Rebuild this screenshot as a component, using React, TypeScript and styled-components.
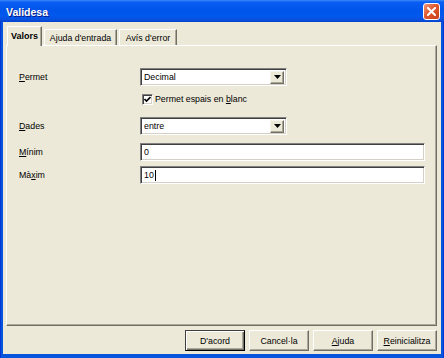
import styled, { createGlobalStyle } from 'styled-components';

const Global = createGlobalStyle`
  html, body { margin: 0; padding: 0; }
  body {
    width: 444px;
    height: 358px;
    overflow: hidden;
    background: #ece9d8;
    font-family: "Liberation Sans", Arial, sans-serif;
    font-size: 8.8px;
    color: #000;
  }
`;

const Window = styled.div`
  width: 444px;
  height: 358px;
  box-sizing: border-box;
  display: flex;
  flex-direction: column;
  background: linear-gradient(to right, #0019cf 0, #0855dd 1px, #0855dd calc(100% - 1px), #0019cf 100%);
  padding: 0 3px 4px;
`;

const TitleBar = styled.div`
  height: 22px;
  margin: 0 -3px;
  display: flex;
  align-items: center;
  justify-content: space-between;
  padding: 0 4px 0 6px;
  background: linear-gradient(to bottom, #3d8cf5 0, #0a5ef3 2px, #0055ea 9px, #0058ee 16px, #0a4fdc 20px, #0042cc 22px);
`;

const Title = styled.span`
  color: #fff;
  font-weight: bold;
  font-size: 10.5px;
  text-shadow: 1px 1px #0a1883;
  margin-top: 1px;
`;

const CloseButton = styled.div`
  width: 17px;
  height: 17px;
  box-sizing: border-box;
  border: 1px solid #fff;
  border-radius: 3px;
  background: linear-gradient(135deg, #ec9877 0%, #e0592f 45%, #c7401a 100%);
  display: flex;
  align-items: center;
  justify-content: center;
`;

const Body = styled.div`
  flex: 1;
  display: flex;
  flex-direction: column;
  background: #ece9d8;
  padding: 4px 4px 3px 3px;
`;

const TabRow = styled.div`
  display: flex;
  align-items: flex-end;
  gap: 2px;
  height: 19px;
  padding-left: 1px;
  position: relative;
  z-index: 1;
`;

const Tab = styled.div<{ $active?: boolean; $w: number }>`
  width: ${p => p.$w}px;
  height: ${p => (p.$active ? 20 : 16)}px;
  box-sizing: border-box;
  margin-bottom: ${p => (p.$active ? -1 : 0)}px;
  padding-bottom: ${p => (p.$active ? 1 : 0)}px;
  background: #ece9d8;
  border-top: 1px solid #fff;
  border-left: 1px solid #fff;
  border-right: 1px solid #716f64;
  box-shadow: inset -1px 0 #aca899;
  display: flex;
  align-items: center;
  justify-content: center;
  font-weight: ${p => (p.$active ? 'bold' : 'normal')};
  font-size: ${p => (p.$active ? 9 : 8.8)}px;
`;

const Panel = styled.div`
  flex: 1;
  box-sizing: border-box;
  border-top: 1px solid #fff;
  border-left: 1px solid #fff;
  border-right: 1px solid #716f64;
  border-bottom: 1px solid #716f64;
  box-shadow: inset -1px -1px #aca899;
  padding: 22px 11px 0 11px;
  display: flex;
  flex-direction: column;
`;

const Row = styled.div<{ $gap: number; $h: number }>`
  display: grid;
  grid-template-columns: 122px 1fr;
  align-items: center;
  margin-top: ${p => p.$gap}px;
  height: ${p => p.$h}px;
`;

const Label = styled.span`
  padding-left: 1px;
`;

const U = styled.span`
  text-decoration: underline;
`;

const Select = styled.div`
  width: 147px;
  height: 18px;
  box-sizing: border-box;
  background: #fff;
  border-top: 1px solid #808080;
  border-left: 1px solid #808080;
  border-right: 1px solid #fff;
  border-bottom: 1px solid #fff;
  box-shadow: inset 1px 1px #404040, inset -1px -1px #d4d0c8;
  display: flex;
  align-items: center;
  justify-content: space-between;
  padding: 2px 2px 2px 3px;
`;

const ArrowButton = styled.div`
  width: 14px;
  height: 13px;
  box-sizing: border-box;
  background: #ece9d8;
  border-top: 1px solid #f4f3ee;
  border-left: 1px solid #f4f3ee;
  border-right: 1px solid #716f64;
  border-bottom: 1px solid #716f64;
  box-shadow: inset -1px -1px #aca899;
  display: flex;
  align-items: center;
  justify-content: center;
`;

const Field = styled.div`
  width: 285px;
  height: 18px;
  box-sizing: border-box;
  background: #fff;
  border-top: 1px solid #808080;
  border-left: 1px solid #808080;
  border-right: 1px solid #fff;
  border-bottom: 1px solid #fff;
  box-shadow: inset 1px 1px #404040, inset -1px -1px #d4d0c8;
  display: flex;
  align-items: center;
  padding-left: 3px;
`;

const Caret = styled.span`
  display: inline-block;
  width: 1px;
  height: 11px;
  background: #000;
  margin-left: 1px;
`;

const CheckLine = styled.div`
  grid-column: 2;
  display: flex;
  align-items: center;
  gap: 2px;
  padding-left: 2px;
`;

const CheckBox = styled.div`
  width: 11px;
  height: 11px;
  box-sizing: border-box;
  background: #fff;
  border-top: 1px solid #808080;
  border-left: 1px solid #808080;
  border-right: 1px solid #fff;
  border-bottom: 1px solid #fff;
  box-shadow: inset 1px 1px #404040, inset -1px -1px #d4d0c8;
  display: flex;
  align-items: center;
  justify-content: center;
`;

const ButtonRow = styled.div`
  display: flex;
  justify-content: flex-end;
  gap: 4px;
  margin-top: 4px;
`;

const Button = styled.div<{ $default?: boolean }>`
  width: 60px;
  height: 21px;
  box-sizing: border-box;
  background: #ece9d8;
  border-top: 1px solid ${p => (p.$default ? '#404040' : '#fff')};
  border-left: 1px solid ${p => (p.$default ? '#404040' : '#fff')};
  border-right: 1px solid ${p => (p.$default ? '#000' : '#716f64')};
  border-bottom: 1px solid ${p => (p.$default ? '#000' : '#716f64')};
  box-shadow: ${p =>
    p.$default
      ? 'inset 1px 1px #fff, inset -1px -1px #716f64, inset -2px -2px #aca899'
      : 'inset -1px -1px #aca899'};
  display: flex;
  align-items: center;
  justify-content: center;
`;

const Arrow = () => (
  <svg width="7" height="4" viewBox="0 0 7 4">
    <path d="M0 0h7L3.5 4z" fill="#000" />
  </svg>
);

export default function App() {
  return (
    <>
      <Global />
      <Window>
        <TitleBar>
          <Title>Validesa</Title>
          <CloseButton>
            <svg width="9" height="9" viewBox="0 0 9 9">
              <path d="M1 1l7 7M8 1l-7 7" stroke="#fff" strokeWidth="2" strokeLinecap="square" />
            </svg>
          </CloseButton>
        </TitleBar>
        <Body>
          <TabRow>
            <Tab $active $w={35}>Valors</Tab>
            <Tab $w={73}>Ajuda d'entrada</Tab>
            <Tab $w={58}>Avís d'error</Tab>
          </TabRow>
          <Panel>
            <Row $gap={0} $h={18}>
              <Label><U>P</U>ermet</Label>
              <Select>
                <span>Decimal</span>
                <ArrowButton><Arrow /></ArrowButton>
              </Select>
            </Row>
            <Row $gap={6} $h={14}>
              <CheckLine>
                <CheckBox>
                  <svg width="7" height="7" viewBox="0 0 7 7">
                    <path d="M0.5 3l2 2 4-4" stroke="#000" strokeWidth="1.6" fill="none" />
                  </svg>
                </CheckBox>
                <span>Permet espais en <U>b</U>lanc</span>
              </CheckLine>
            </Row>
            <Row $gap={11} $h={18}>
              <Label><U>D</U>ades</Label>
              <Select>
                <span>entre</span>
                <ArrowButton><Arrow /></ArrowButton>
              </Select>
            </Row>
            <Row $gap={8} $h={18}>
              <Label><U>M</U>ínim</Label>
              <Field>0</Field>
            </Row>
            <Row $gap={5} $h={18}>
              <Label>Mà<U>x</U>im</Label>
              <Field>10<Caret /></Field>
            </Row>
          </Panel>
          <ButtonRow>
            <Button $default>D'acord</Button>
            <Button>Cancel·la</Button>
            <Button><U>A</U>juda</Button>
            <Button><U>R</U>einicialitza</Button>
          </ButtonRow>
        </Body>
      </Window>
    </>
  );
}
